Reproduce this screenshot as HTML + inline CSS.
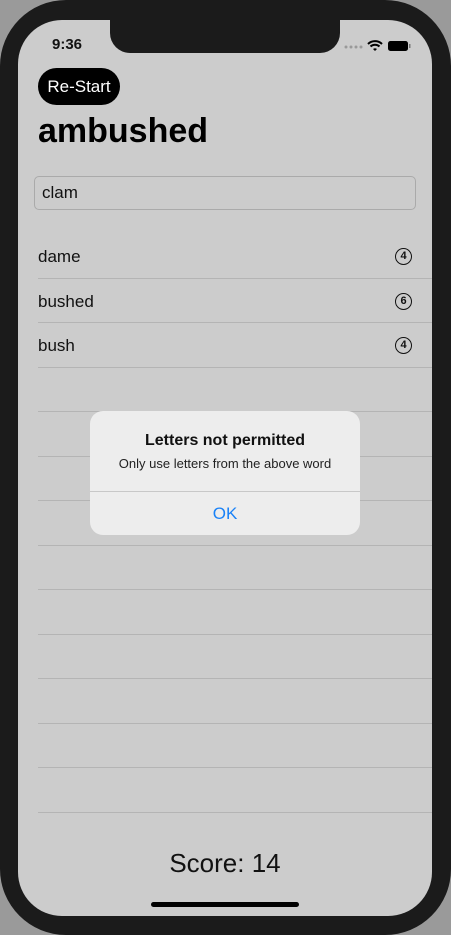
<!DOCTYPE html>
<html><head><style>
*{margin:0;padding:0;box-sizing:border-box}
body{width:451px;height:935px;background:#9a9a9a;position:relative;overflow:hidden;font-family:"Liberation Sans",sans-serif}
.frame{position:absolute;left:0;top:0;width:451px;height:935px;background:#1b1b1b;border-radius:66px}
.screen{position:absolute;left:18px;top:20px;width:414px;height:896px;background:#cccccc;border-radius:44px;overflow:hidden}
.notch{position:absolute;left:92px;top:0;width:230px;height:33px;background:#1b1b1b;border-radius:0 0 20px 20px}
.time{position:absolute;left:34px;top:16px;font-size:15px;font-weight:bold;color:#111}
.btn{position:absolute;left:20px;top:48px;width:82px;height:37px;background:#000;color:#fff;border-radius:19px;font-size:17px;line-height:37px;text-align:center}
h1{position:absolute;left:20px;top:92px;font-size:34px;font-weight:bold;color:#000}
.input{position:absolute;left:16px;top:156px;width:382px;height:34px;border:1px solid #aaa;border-radius:5px;font-size:17px;line-height:32px;padding-left:7px;color:#111}
.row{position:absolute;left:20px;width:394px;height:44.5px;border-bottom:1px solid #b4b4b4;font-size:17px;color:#111}
.row span{position:absolute;left:0;top:13px}
.row i{position:absolute;right:20px;top:14px;width:17px;height:17px;border:1.5px solid #111;border-radius:50%;font-style:normal;font-size:11px;text-align:center;line-height:14px;font-weight:bold}
.alert{position:absolute;left:72px;top:391px;width:270px;height:124px;background:#ededed;border-radius:13px}
.alert .t{position:absolute;top:21px;width:100%;text-align:center;font-size:16px;font-weight:bold;color:#111}
.alert .m{position:absolute;top:45px;width:100%;text-align:center;font-size:13px;color:#222}
.alert .d{position:absolute;top:80px;width:100%;border-top:1px solid #c8c8c8}
.alert .ok{position:absolute;top:93px;width:100%;text-align:center;font-size:17px;color:#1a82f7}
.score{position:absolute;top:828px;width:100%;text-align:center;font-size:26px;color:#111}
.home{position:absolute;left:133px;top:882px;width:148px;height:5px;background:#000;border-radius:3px}
</style></head><body>
<div class="frame"></div>
<div class="screen">
<div class="notch"></div>
<div class="time">9:36</div>
<svg style="position:absolute;left:326px;top:19px" width="70" height="14">
<g fill="#999"><circle cx="2" cy="8" r="1.5"/><circle cx="7" cy="8" r="1.5"/><circle cx="12" cy="8" r="1.5"/><circle cx="17" cy="8" r="1.5"/></g>
<path d="M24 5 A10 10 0 0 1 38 5 M26.5 7.5 A6.5 6.5 0 0 1 35.5 7.5" stroke="#000" stroke-width="2" fill="none"/>
<path d="M29 10 L31 12 L33 10 A3 3 0 0 0 29 10Z" fill="#000"/>
<rect x="44" y="2" width="20" height="10" rx="2.5" fill="#000"/><rect x="65" y="5" width="1.5" height="4" fill="#777"/>
</svg>
<div class="btn">Re-Start</div>
<h1>ambushed</h1>
<div class="input">clam</div>
<div class="row" style="top:214px"><span>dame</span><i>4</i></div>
<div class="row" style="top:258.5px"><span>bushed</span><i>6</i></div>
<div class="row" style="top:303px"><span>bush</span><i>4</i></div>
<div class="row" style="top:347.5px"></div>
<div class="row" style="top:392px"></div>
<div class="row" style="top:436.5px"></div>
<div class="row" style="top:481px"></div>
<div class="row" style="top:525.5px"></div>
<div class="row" style="top:570px"></div>
<div class="row" style="top:614.5px"></div>
<div class="row" style="top:659px"></div>
<div class="row" style="top:703.5px"></div>
<div class="row" style="top:748px"></div>
<div class="alert"><div class="t">Letters not permitted</div><div class="m">Only use letters from the above word</div><div class="d"></div><div class="ok">OK</div></div>
<div class="score">Score: 14</div>
<div class="home"></div>
</div>
</body></html>
